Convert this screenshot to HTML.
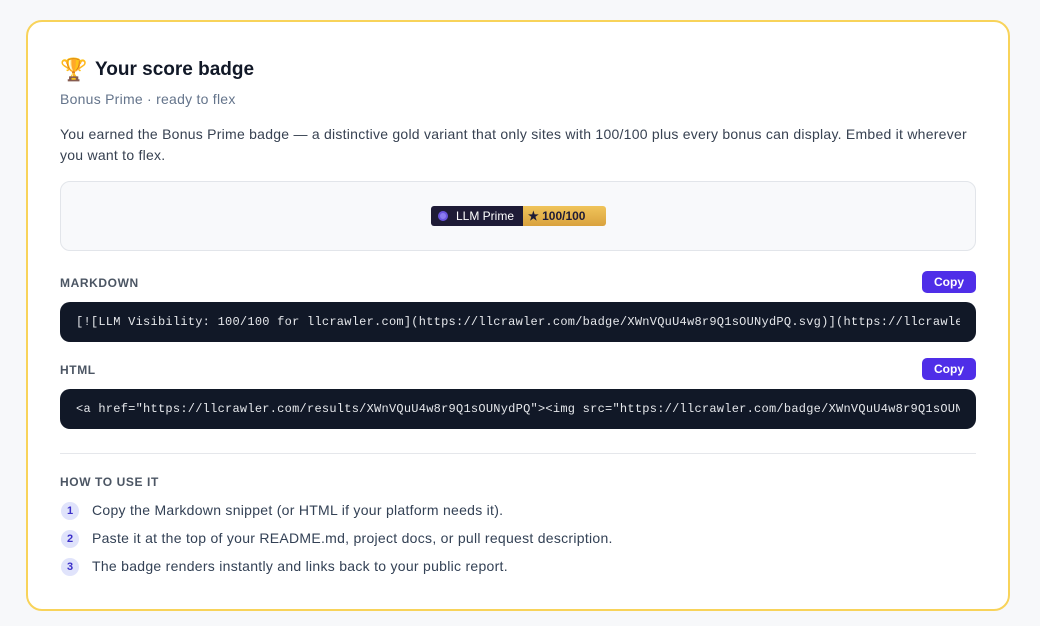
<!DOCTYPE html><html><head><style>
*{box-sizing:border-box;margin:0;padding:0}
body{width:1040px;height:626px;background:#f7f8fa;font-family:"Liberation Sans",sans-serif;color:#334155;position:relative;overflow:hidden}
.card{position:absolute;left:26px;top:20px;width:984px;height:591px;background:#fff;border:2px solid #f8d35a;border-radius:16px}
.a{position:absolute}
.t{letter-spacing:.25px}
.lbl{font-size:12px;font-weight:bold;letter-spacing:.6px;color:#4b5563;left:60px}
.btn{position:absolute;left:922px;width:54px;height:22px;background:#4f2ee8;color:#fff;border-radius:5px;font-size:12px;font-weight:bold;text-align:center;line-height:22px}
.code{position:absolute;left:60px;width:916px;height:40px;background:#111827;border-radius:10px;color:#e5e7eb;font-family:"Liberation Mono",monospace;font-size:12px;letter-spacing:.25px;line-height:40px;padding-left:16px;white-space:nowrap;overflow:hidden}
.code span{display:block;width:884px;overflow:hidden}
.li{position:absolute;left:61px;font-size:14px;color:#334155;letter-spacing:.28px}
.li b{display:inline-block;width:18px;height:18px;border-radius:50%;background:#e0e3fb;color:#3b2fc9;font-size:11px;text-align:center;line-height:18px;margin-right:13px;vertical-align:middle;letter-spacing:0}
</style></head><body>
<div class="card"></div>
<div class="a" style="left:60px;top:57px;font-size:22px">🏆</div>
<div class="a" style="left:95px;top:59px;font-size:19px;font-weight:bold;color:#111827">Your score badge</div>
<div class="a t" style="left:60px;top:91px;font-size:14px;color:#64748b">Bonus Prime · ready to flex</div>
<div class="a t" style="left:60px;top:124px;width:916px;font-size:14px;line-height:21px;color:#374151">You earned the Bonus Prime badge — a distinctive gold variant that only sites with 100/100 plus every bonus can display. Embed it wherever you want to flex.</div>
<div class="a" style="left:60px;top:181px;width:916px;height:70px;background:#f8f9fb;border:1px solid #e2e5ea;border-radius:10px"></div>
<div class="a" style="left:431px;top:206px;width:92px;height:20px;background:#1e1b36;border-radius:3px 0 0 3px;color:#fff;font-size:12px;line-height:20px">
<span style="position:absolute;left:7px;top:5px;width:10px;height:10px;border-radius:50%;background:#8b7cf0;border:2.5px solid #6a55e0"></span><span style="position:absolute;left:25px">LLM Prime</span></div>
<div class="a" style="left:523px;top:206px;width:83px;height:20px;background:linear-gradient(#f0c45a,#d9a23e);border-radius:0 3px 3px 0;color:#1e1b36;font-size:12px;font-weight:bold;line-height:20px;padding-left:5px">★ 100/100</div>
<div class="a lbl" style="top:276px">MARKDOWN</div>
<div class="btn" style="top:271px">Copy</div>
<div class="code" style="top:302px"><span>[![LLM Visibility: 100/100 for llcrawler.com](https://llcrawler.com/badge/XWnVQuU4w8r9Q1sOUNydPQ.svg)](https://llcrawler.com/results/XWnVQuU4w8r9Q1sOUNydPQ)</span></div>
<div class="a lbl" style="top:363px">HTML</div>
<div class="btn" style="top:358px">Copy</div>
<div class="code" style="top:389px"><span>&lt;a href="https://llcrawler.com/results/XWnVQuU4w8r9Q1sOUNydPQ"&gt;&lt;img src="https://llcrawler.com/badge/XWnVQuU4w8r9Q1sOUNydPQ.svg"&gt;&lt;/a&gt;</span></div>
<div class="a" style="left:60px;top:453px;width:916px;height:1px;background:#e5e7eb"></div>
<div class="a lbl" style="top:475px">HOW TO USE IT</div>
<div class="li" style="top:502px"><b>1</b>Copy the Markdown snippet (or HTML if your platform needs it).</div>
<div class="li" style="top:530px"><b>2</b>Paste it at the top of your README.md, project docs, or pull request description.</div>
<div class="li" style="top:558px"><b>3</b>The badge renders instantly and links back to your public report.</div>
</body></html>
